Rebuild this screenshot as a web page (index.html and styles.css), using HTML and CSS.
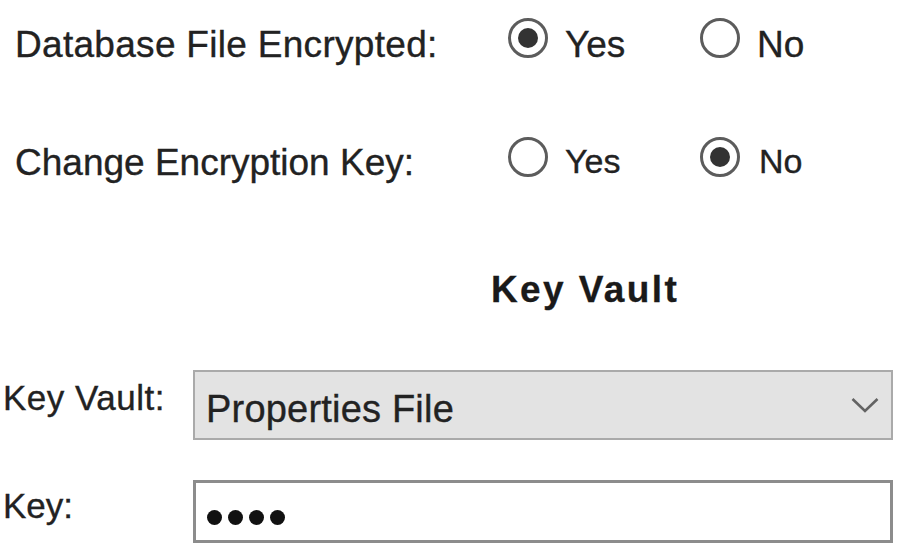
FILE: index.html
```html
<!DOCTYPE html>
<html>
<head>
<meta charset="utf-8">
<link rel="stylesheet" href="styles.css">
</head>
<body>
<div class="form">
  <div class="radio-row row1">
    <div class="label">Database File Encrypted:</div>
    <div class="option opt-first">
      <span class="radio checked"></span>
      <span class="opt-text">Yes</span>
    </div>
    <div class="option">
      <span class="radio"></span>
      <span class="opt-text">No</span>
    </div>
  </div>
  <div class="radio-row row2">
    <div class="label">Change Encryption Key:</div>
    <div class="option opt-first">
      <span class="radio"></span>
      <span class="opt-text">Yes</span>
    </div>
    <div class="option">
      <span class="radio checked"></span>
      <span class="opt-text">No</span>
    </div>
  </div>
  <div class="heading">Key Vault</div>
  <div class="field-row combo-row">
    <div class="field-label">Key Vault:</div>
    <div class="combo">
      <span class="combo-text">Properties File</span>
      <svg class="chevron" width="28" height="16" viewBox="0 0 28 16"><polyline points="1.5,2 14,14 26.5,2" fill="none" stroke="#636363" stroke-width="2.6"/></svg>
    </div>
  </div>
  <div class="field-row key-row">
    <div class="field-label">Key:</div>
    <div class="textbox">
      <span class="dot"></span><span class="dot"></span><span class="dot"></span><span class="dot"></span>
    </div>
  </div>
</div>
</body>
</html>
```
FILE: styles.css
```css
html, body {
  margin: 0;
  padding: 0;
  background: #ffffff;
}
body {
  font-family: "Liberation Sans", Arial, sans-serif;
  color: #222222;
  -webkit-text-stroke: 0.35px #222222;
  width: 903px;
  height: 553px;
  overflow: hidden;
}
.form {
  display: flex;
  flex-direction: column;
}
.radio-row {
  display: flex;
  align-items: flex-start;
  height: 120px;
  padding-left: 15px;
}
.label {
  width: 493px;
  font-size: 37px;
  line-height: 1;
}
.row1 .label { margin-top: 26px; letter-spacing: 0.3px; }
.row2 .label { margin-top: 24px; }
.option {
  display: flex;
  align-items: flex-start;
  gap: 17px;
}
.opt-first { width: 192px; }
.radio {
  box-sizing: border-box;
  width: 40px;
  height: 40px;
  border: 3px solid #5c5c5c;
  border-radius: 50%;
  display: flex;
  align-items: center;
  justify-content: center;
  background: #fff;
}
.radio.checked::after {
  content: "";
  width: 20px;
  height: 20px;
  border-radius: 50%;
  background: #333333;
}
.row1 .radio { margin-top: 18px; }
.row2 .radio { margin-top: 17px; }
.opt-text {
  line-height: 1;
}
.row1 .opt-text { font-size: 37px; margin-top: 26px; }
.row2 .opt-text { font-size: 34px; margin-top: 24px; }
.row2 .option:not(.opt-first) .opt-text { margin-left: 2px; }
.heading {
  height: 100px;
  box-sizing: border-box;
  padding-left: 491px;
  padding-top: 31px;
  font-size: 37px;
  font-weight: bold;
  line-height: 1;
  letter-spacing: 2.4px;
  color: #1a1a1a;
  -webkit-text-stroke: 0.3px #1a1a1a;
}
.field-row {
  display: flex;
  align-items: flex-start;
  padding-left: 3px;
}
.combo-row { height: 120px; }
.key-row { height: 93px; }
.field-label {
  width: 190px;
  font-size: 35px;
  line-height: 1;
}
.combo-row .field-label { margin-top: 40px; letter-spacing: 0.5px; }
.key-row .field-label { margin-top: 28px; }
.combo {
  box-sizing: border-box;
  margin-top: 30px;
  width: 700px;
  height: 70px;
  background: #e3e3e3;
  border: 2px solid #aaaaaa;
  display: flex;
  align-items: center;
  justify-content: space-between;
  padding: 8px 12px 0 11px;
}
.combo-text {
  font-size: 38px;
  line-height: 1;
  letter-spacing: 0.2px;
}
.chevron {
  margin-bottom: 8px;
}
.textbox {
  box-sizing: border-box;
  margin-top: 20px;
  width: 700px;
  height: 63px;
  background: #ffffff;
  border: 3px solid #8c8c8c;
  display: flex;
  align-items: center;
  gap: 6px;
  padding: 11px 0 0 11px;
}
.dot {
  width: 15px;
  height: 15px;
  border-radius: 50%;
  background: #111111;
}
```
